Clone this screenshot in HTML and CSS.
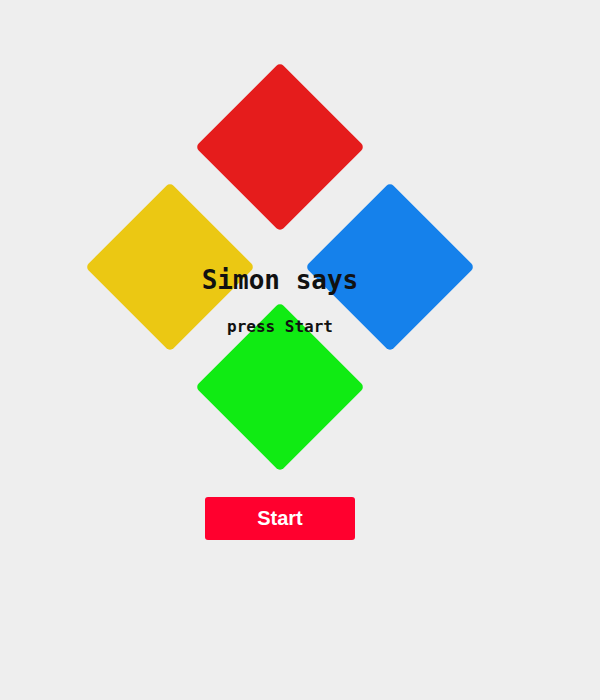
FILE: index.html
```html
<!DOCTYPE html>
<html lang="en">
<head>
<meta charset="utf-8">
<title>Simon says</title>
<link rel="stylesheet" href="styles.css">
</head>
<body>
<main class="app">
  <div class="board">
    <div class="row">
      <div class="pad pad-red"></div>
    </div>
    <div class="row row-middle">
      <div class="pad pad-yellow"></div>
      <div class="pad pad-blue"></div>
    </div>
    <div class="row">
      <div class="pad pad-green"></div>
    </div>
    <div class="overlay">
      <h1 class="title">Simon says</h1>
      <p class="status">press Start</p>
    </div>
  </div>
  <button class="start" type="button">Start</button>
</main>
</body>
</html>
```

FILE: styles.css
```css
html, body {
  margin: 0;
  padding: 0;
  background: #eeeeee;
}

.app {
  width: 560px;
  display: flex;
  flex-direction: column;
  align-items: center;
  padding-top: 86.5px;
}

.board {
  position: relative;
  display: flex;
  flex-direction: column;
  align-items: center;
}

.row {
  display: flex;
  justify-content: center;
  gap: 100px;
  height: 120px;
}

.pad {
  width: 120px;
  height: 120px;
  border-radius: 5px;
  transform: rotate(45deg);
}

.pad-red { background: #e51c1c; }
.pad-yellow { background: #ebc813; }
.pad-blue { background: #1581eb; }
.pad-green { background: #10eb13; }

.overlay {
  position: absolute;
  left: 0;
  right: 0;
  top: 178.5px;
  text-align: center;
  font-family: "DejaVu Sans Mono", monospace;
  color: #111111;
}

.title {
  margin: 0;
  font-size: 26px;
  line-height: 30px;
  font-weight: bold;
}

.status {
  margin: 22px 0 0;
  font-size: 16px;
  line-height: 19px;
  font-weight: bold;
}

.start {
  margin-top: 50.5px;
  width: 150px;
  height: 43px;
  border: none;
  border-radius: 3px;
  background: #ff002e;
  color: #ffffff;
  font-family: "Liberation Sans", Arial, sans-serif;
  font-weight: bold;
  font-size: 20px;
  padding: 0;
}
```
